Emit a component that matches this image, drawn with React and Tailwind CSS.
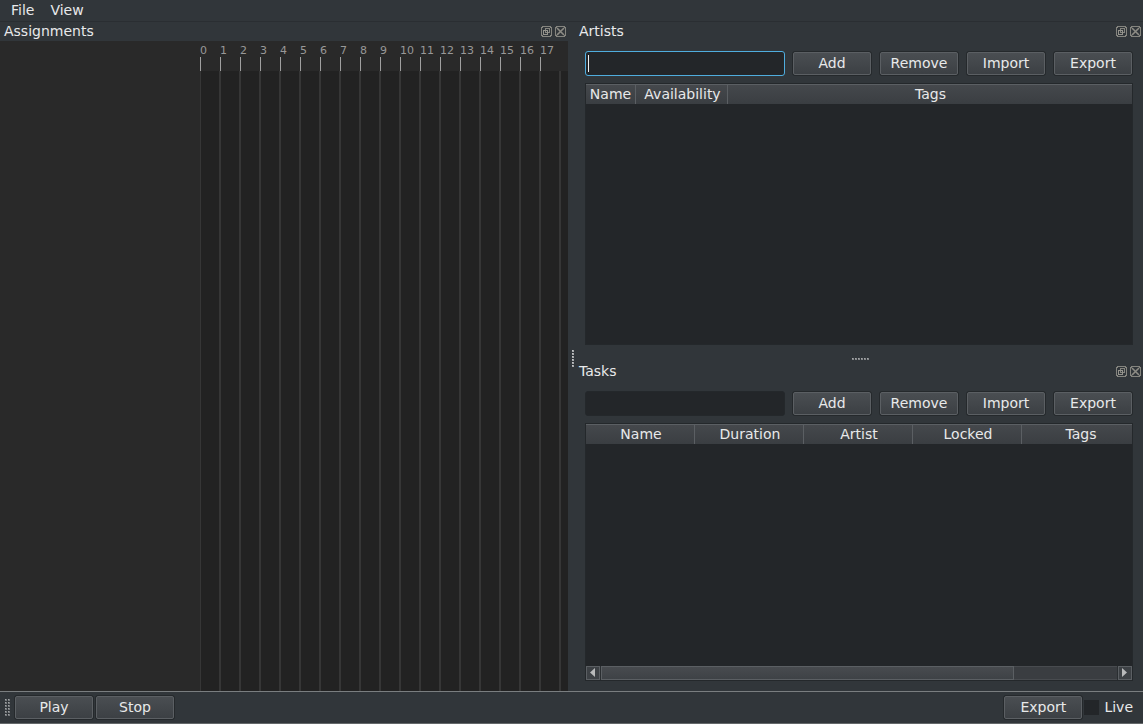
import React from 'react';

const frame = 'border border-[#24282b] bg-[#232629]';

function IconFrame() {
  return (
    <>
      <path d="M1 0.5H10M1 10.5H10M0.5 1V10M10.5 1V10" stroke="#85857f" />
      <path d="M1 1h1v1h-1zM9 1h1v1h-1zM1 9h1v1h-1zM9 9h1v1h-1z" fill="#85857f" stroke="none" />
    </>
  );
}

function FloatIcon() {
  return (
    <svg width="11" height="11" viewBox="0 0 11 11" fill="none" shapeRendering="crispEdges" aria-hidden="true">
      <IconFrame />
      <rect x="4.5" y="2.5" width="4" height="4" stroke="#85857f" />
      <rect x="2.5" y="4.5" width="4" height="4" stroke="#95948d" />
    </svg>
  );
}

function CloseIcon() {
  return (
    <svg width="11" height="11" viewBox="0 0 11 11" fill="none" aria-hidden="true">
      <g shapeRendering="crispEdges"><IconFrame /></g>
      <path d="M2 2L9 9M9 2L2 9" stroke="#8d8c85" strokeWidth="1.6" />
    </svg>
  );
}

function DockTitle({ title, pad }) {
  return (
    <header className={`flex h-[19px] shrink-0 items-center justify-between pr-[2px] ${pad}`}>
      <h2 className="pb-[2px]">{title}</h2>
      <div className="flex gap-[3px]">
        <button type="button" aria-label={`Float ${title}`}><FloatIcon /></button>
        <button type="button" aria-label={`Close ${title}`}><CloseIcon /></button>
      </div>
    </header>
  );
}

function PushButton({ children }) {
  return (
    <button
      type="button"
      className="h-[25px] w-20 shrink-0 rounded-[3px] border border-[#25292c] bg-[#25292c]"
    >
      <span className="flex h-full items-center justify-center rounded-[2px] border border-[#5b5f63] bg-linear-to-b from-[#4a4e52] to-[#3c4044] pb-[2px]">
        {children}
      </span>
    </button>
  );
}

function HeaderTable({ label, columns }) {
  return (
    <table className="w-full table-fixed border-separate border-spacing-0" aria-label={label}>
      <thead>
        <tr>
          {columns.map(([name, width]) => (
            <th
              key={name}
              scope="col"
              className={`h-5 border-t border-r border-[#5b5f63] bg-linear-to-b from-[#45484c] to-[#3a3e42] pt-0 pr-0 pb-0 font-normal leading-[17px] whitespace-nowrap last:border-r-0 ${width}`}
            >
              {name}
            </th>
          ))}
        </tr>
      </thead>
    </table>
  );
}

function Dock({ title, grow, focused, columns, scroll, bottom }) {
  return (
    <section className={`flex min-h-0 basis-0 flex-col ${grow}`}>
      <DockTitle title={title} pad="pl-[2px]" />
      <div className={`flex min-h-0 flex-1 flex-col gap-[7px] pt-[10px] pr-[10px] pl-2 ${bottom}`}>
        <div className="flex gap-[7px]">
          <div className="relative min-w-0 flex-1">
            <input
              type="text"
              aria-label={`${title} name`}
              className={`block h-[25px] w-full rounded-[3px] border bg-[#232629] px-1 outline-none ${focused ? 'border-[#4fadde]' : 'border-[#24282b]'}`}
            />
            {focused && <span className="absolute top-1 left-[3px] h-[17px] w-px bg-[#eff0f1]" />}
          </div>
          <PushButton>Add</PushButton>
          <PushButton>Remove</PushButton>
          <PushButton>Import</PushButton>
          <PushButton>Export</PushButton>
        </div>
        <div className={`flex min-h-0 flex-1 flex-col justify-between ${frame}`}>
          <HeaderTable label={title} columns={columns} />
          {scroll && <ScrollBar />}
        </div>
      </div>
    </section>
  );
}

function ScrollButton({ label, path }) {
  return (
    <button type="button" aria-label={label} className="flex h-[14px] w-[14px] items-center justify-center border border-[#5b5f63] bg-[#3d4145]">
      <svg width="6" height="10" viewBox="0 0 6 10" fill="#b9babb" aria-hidden="true"><path d={path} /></svg>
    </button>
  );
}

function ScrollBar() {
  return (
    <div className="flex h-[14px] shrink-0 gap-px bg-[#2a2e31]">
      <ScrollButton label="Scroll left" path="M5 0V9L0 4.5Z" />
      <div className="flex-1 border-y border-[#484b4f] bg-[#3a3d41]">
        <div className="-my-px h-[14px] w-4/5 border border-[#5b5f63] bg-linear-to-b from-[#484b4f] to-[#3e4246]" />
      </div>
      <ScrollButton label="Scroll right" path="M0 0V9L5 4.5Z" />
    </div>
  );
}

function Dots({ cols, rows, fill, highlight }) {
  const dots = [];
  for (let c = 0; c < cols; c++) for (let r = 0; r < rows; r++) dots.push([c * 3, r * 3]);
  return (
    <svg width={cols * 3 - 1} height={rows * 3 - 1} shapeRendering="crispEdges" aria-hidden="true">
      {dots.map(([x, y]) => (
        <g key={`${x}-${y}`}>
          <rect x={x} y={y} width="2" height="2" fill={fill} />
          <rect x={x} y={y} width="1" height="1" fill={highlight} />
        </g>
      ))}
    </svg>
  );
}

function Timeline() {
  return (
    <div className="flex min-h-0 flex-1 bg-[#292929]">
      <div className="w-[200px] shrink-0" />
      <div className="flex min-w-0 flex-1 flex-col overflow-hidden">
        <div className="flex h-[30px] shrink-0 text-[11px] leading-[16px] text-[#989898]">
          {Array.from({ length: 18 }, (_, n) => (
            <div key={n} className="flex w-5 shrink-0 flex-col pt-[2px]">
              <span className="h-[14px]">{n}</span>
              <span className="w-px flex-1 bg-[#a0a0a0]" />
            </div>
          ))}
        </div>
        <div className="flex flex-1 bg-[#222222]">
          <div className="w-[19px] shrink-0 border-l border-[#363636]" />
          {Array.from({ length: 18 }, (_, n) => (
            <div key={n} className="w-5 shrink-0 border-l-2 border-[#363636]" />
          ))}
        </div>
      </div>
    </div>
  );
}

export default function App() {
  return (
    <div className="flex h-screen flex-col overflow-hidden bg-[#31363a] font-['DejaVu_Sans',sans-serif] text-[14px] leading-[18px] text-[#e8e9ea]">
      <nav className="flex h-[22px] shrink-0 items-center gap-4 border-b border-[#2a2e32] px-[11px] pb-[2px]">
        <button type="button">File</button>
        <button type="button">View</button>
      </nav>
      <main className="flex min-h-0 flex-1">
        <section className="flex min-w-0 grow-568 basis-0 flex-col">
          <DockTitle title="Assignments" pad="pl-1" />
          <Timeline />
        </section>
        <div className="flex w-[9px] shrink-0 items-center justify-center pt-1">
          <Dots cols={1} rows={6} fill="#a5a7a9" highlight="#c4c5c6" />
        </div>
        <div className="flex min-w-0 grow-566 basis-0 flex-col">
          <Dock
            title="Artists"
            grow="grow-332"
            bottom="pb-[9px]"
            focused
            columns={[['Name', 'w-[50px] pl-0'], ['Availability', 'w-[92px] pl-[2px]'], ['Tags', 'pl-px']]}
          />
          <div className="flex h-2 shrink-0 items-center justify-center pt-[2px]">
            <Dots cols={6} rows={1} fill="#85888a" highlight="#a5a7a9" />
          </div>
          <Dock
            title="Tasks"
            grow="grow-329"
            bottom="pb-[10px]"
            scroll
            columns={[
              ['Name', 'w-[109px] pl-[2px]'],
              ['Duration', 'w-[109px] pl-[2px]'],
              ['Artist', 'w-[109px] pl-[2px]'],
              ['Locked', 'w-[109px] pl-[2px]'],
              ['Tags', 'pl-2'],
            ]}
          />
        </div>
      </main>
      <footer className="flex h-[33px] shrink-0 items-center gap-px border-t border-b border-t-[#7a7e80] border-b-[#64686a] pr-[10px] pl-[5px]">
        <div className="mr-[3px]"><Dots cols={2} rows={6} fill="#75797c" highlight="#a0a3a5" /></div>
        <PushButton>Play</PushButton>
        <PushButton>Stop</PushButton>
        <div className="flex-1" />
        <PushButton>Export</PushButton>
        <label className="flex items-center gap-[5px]">
          <input type="checkbox" className="h-[15px] w-[15px] appearance-none bg-[#232629]" />
          <span className="pb-[2px]">Live</span>
        </label>
      </footer>
    </div>
  );
}
